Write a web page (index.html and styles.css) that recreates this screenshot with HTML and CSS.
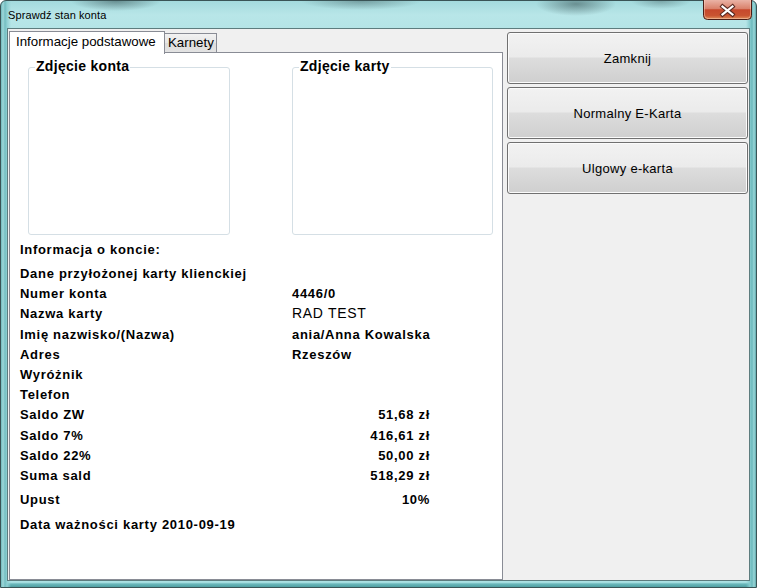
FILE: index.html
```html
<!DOCTYPE html>
<html lang="pl">
<head>
<meta charset="utf-8">
<title>Sprawdź stan konta</title>
<link rel="stylesheet" href="styles.css">
</head>
<body>
<div class="window">
  <div class="titlebar">
    <span class="title">Sprawdź stan konta</span>
    <div class="close">
      <svg width="49" height="20" viewBox="0 0 49 20">
        <defs>
          <linearGradient id="cg" x1="0" y1="0" x2="0" y2="1">
            <stop offset="0" stop-color="#eab3a6"/>
            <stop offset="0.45" stop-color="#d9806a"/>
            <stop offset="0.5" stop-color="#c6482c"/>
            <stop offset="0.8" stop-color="#c95431"/>
            <stop offset="1" stop-color="#e2955f"/>
          </linearGradient>
        </defs>
        <path d="M0.5 0 V15.5 Q0.5 19.5 4.5 19.5 H44.5 Q48.5 19.5 48.5 15.5 V0" fill="url(#cg)" stroke="#4a1d16" stroke-width="1"/>
        <path d="M1.5 0 V15 Q1.5 18.5 5 18.5 H44 Q47.5 18.5 47.5 15 V0" fill="none" stroke="rgba(255,220,200,0.45)" stroke-width="1"/>
        <path d="M19.5 6.5 L29.5 14.5 M29.5 6.5 L19.5 14.5" stroke="#5a2a22" stroke-width="4.2" stroke-linecap="square"/>
        <path d="M19.5 6.5 L29.5 14.5 M29.5 6.5 L19.5 14.5" stroke="#ffffff" stroke-width="2.2" stroke-linecap="square"/>
      </svg>
    </div>
  </div>
  <div class="client">
    <div class="tabctl">
      <div class="tabs">
        <div class="tab active">Informacje podstawowe</div>
        <div class="tab">Karnety</div>
      </div>
      <div class="panel">
        <div class="groups">
          <div class="group"><span class="legend">Zdjęcie konta</span></div>
          <div class="group g2"><span class="legend">Zdjęcie karty</span></div>
        </div>
        <div class="heading">Informacja o koncie:</div>
        <div class="rows">
          <div class="row"><span>Dane przyłożonej karty klienckiej</span><span></span></div>
          <div class="row"><span>Numer konta</span><span class="v">4446/0</span></div>
          <div class="row"><span>Nazwa karty</span><span class="v reg">RAD TEST</span></div>
          <div class="row"><span>Imię nazwisko/(Nazwa)</span><span class="v">ania/Anna Kowalska</span></div>
          <div class="row"><span>Adres</span><span class="v">Rzeszów</span></div>
          <div class="row"><span>Wyróżnik</span><span></span></div>
          <div class="row"><span>Telefon</span><span></span></div>
          <div class="row"><span>Saldo ZW</span><span class="amt">51,68 zł</span></div>
          <div class="row"><span>Saldo 7%</span><span class="amt">416,61 zł</span></div>
          <div class="row"><span>Saldo 22%</span><span class="amt">50,00 zł</span></div>
          <div class="row"><span>Suma sald</span><span class="amt">518,29 zł</span></div>
          <div class="row upust"><span>Upust</span><span class="amt">10%</span></div>
          <div class="row data"><span>Data ważności karty 2010-09-19</span><span></span></div>
        </div>
      </div>
    </div>
    <div class="buttons">
      <div class="btn">Zamknij</div>
      <div class="btn">Normalny E-Karta</div>
      <div class="btn">Ulgowy e-karta</div>
    </div>
  </div>
</div>
</body>
</html>
```

FILE: styles.css
```css
html, body {
  margin: 0;
  padding: 0;
  background: #ffffff;
}

body {
  width: 757px;
  height: 588px;
  overflow: hidden;
  font-family: "Liberation Sans", Arial, sans-serif;
  color: #000;
}

.window {
  width: 757px;
  height: 588px;
  box-sizing: border-box;
  border: 1px solid #3a5456;
  border-radius: 6px 6px 0 0;
  display: flex;
  flex-direction: column;
  background:
    radial-gradient(ellipse 45px 10px at 115px 0px, rgba(30, 50, 52, 0.45), rgba(30, 50, 52, 0)),
    radial-gradient(ellipse 60px 9px at 360px 0px, rgba(30, 50, 52, 0.35), rgba(30, 50, 52, 0)),
    radial-gradient(ellipse 40px 12px at 575px 3px, rgba(30, 50, 52, 0.45), rgba(30, 50, 52, 0)),
    radial-gradient(ellipse 30px 8px at 660px 0px, rgba(30, 50, 52, 0.3), rgba(30, 50, 52, 0)),
    linear-gradient(to right, #6fb9bc 0px, #9fd8da 2px, #74bec1 4px, #8fd0d3 6px, rgba(143, 208, 211, 0) 10px),
    linear-gradient(to left, #5ea9ac 0px, #9ad6d8 2px, #6cb9bc 4px, #86cbce 6px, rgba(134, 203, 206, 0) 10px),
    linear-gradient(to top, #4f9fa2 0px, #6ab8bb 3px, #b6e8ea 5px, rgba(182, 232, 234, 0) 7px),
    linear-gradient(to bottom, #a3dadd 0px, #b8e6e8 14px, #b4e4e6 28px, #8fd0d3 40px);
}

.titlebar {
  height: 27px;
  display: flex;
  align-items: center;
  padding-left: 7px;
}

.title {
  font-size: 11px;
  letter-spacing: 0.1px;
  line-height: 27px;
  padding-top: 1px;
  color: #000;
}

.close {
  margin-left: auto;
  margin-right: 4px;
  align-self: flex-start;
  margin-top: -1px;
  width: 49px;
  height: 20px;
}

.close svg {
  display: block;
}

.client {
  flex: 1;
  margin: 0 6px 6px 6px;
  border: 1px solid #5d7c7e;
  background: #f0f0f0;
  display: flex;
  min-height: 0;
}

.tabctl {
  margin-left: 1px;
  width: 494px;
  display: flex;
  flex-direction: column;
}

.tabs {
  margin-top: 2px;
  height: 21px;
  display: flex;
  align-items: flex-start;
}

.tab {
  box-sizing: border-box;
  border: 1px solid #898c95;
  border-bottom: none;
  font-size: 13.3px;
  white-space: nowrap;
}

.tab.active {
  position: relative;
  z-index: 1;
  width: 156px;
  height: 23px;
  padding-left: 6px;
  line-height: 20px;
  background: #ffffff;
}

.tab:not(.active) {
  margin-top: 2px;
  width: 52px;
  height: 19px;
  padding-left: 3px;
  line-height: 18px;
  border-left: none;
  background: linear-gradient(#f2f2f2, #e6e6e6 50%, #dcdcdc 51%, #e3e3e3);
}

.panel {
  flex: 1;
  box-sizing: border-box;
  border: 1px solid #898c95;
  background: #ffffff;
  padding-left: 10px;
  font-size: 13px;
  font-weight: bold;
  letter-spacing: 0.7px;
}

.groups {
  margin-top: 14px;
  padding-left: 8px;
  display: flex;
  gap: 62px;
}

.group {
  box-sizing: border-box;
  width: 202px;
  height: 168px;
  border: 1px solid #d5dfe5;
  border-radius: 3px;
}

.group.g2 {
  width: 201px;
}

.legend {
  display: block;
  width: fit-content;
  margin: -10px 0 0 6px;
  padding: 0 1px;
  background: #ffffff;
  font-size: 14px;
  font-weight: bold;
  letter-spacing: 0.3px;
  line-height: 16px;
}

.heading {
  margin-top: 5px;
  line-height: 20px;
}

.rows {
  margin-top: 4px;
}

.row {
  display: grid;
  grid-template-columns: 272px 138px;
  line-height: 20.2px;
  white-space: nowrap;
}

.row .v {
  justify-self: start;
}

.row .reg {
  font-weight: normal;
  font-size: 14px;
  line-height: 18px;
}

.row .amt {
  justify-self: end;
}

.row.upust {
  margin-top: 4px;
}

.row.data {
  margin-top: 5px;
}

.buttons {
  margin-left: 4px;
  margin-top: 3px;
  width: 241px;
  display: flex;
  flex-direction: column;
  gap: 3px;
}

.btn {
  box-sizing: border-box;
  height: 52px;
  border: 1px solid #707070;
  border-radius: 3px;
  box-shadow: inset 0 0 0 1px #fbfbfb;
  background: linear-gradient(#f2f2f2 0%, #ebebeb 48%, #dddddd 50%, #cfcfcf 100%);
  display: flex;
  align-items: center;
  justify-content: center;
  padding-top: 1px;
  font-size: 13px;
  letter-spacing: 0.3px;
  line-height: 15px;
}
```
